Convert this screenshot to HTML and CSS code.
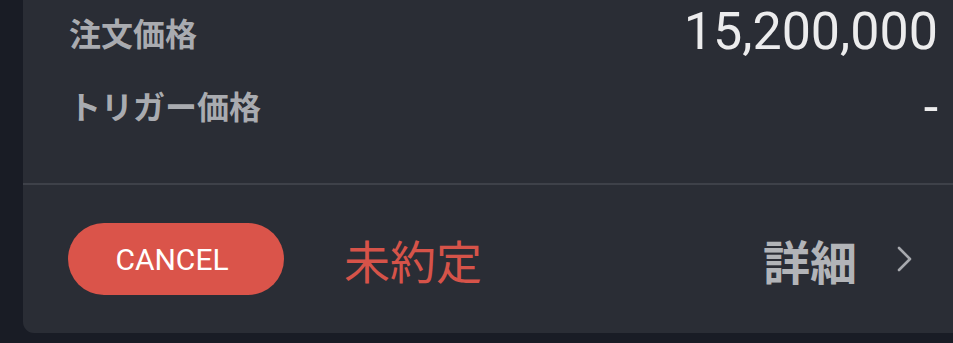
FILE: index.html
```html
<!DOCTYPE html>
<html lang="ja">
<head>
<meta charset="utf-8">
<link rel="stylesheet" href="styles.css">
</head>
<body>
<div class="card">
  <div class="info">
    <div class="row row-first">
      <span class="label">注文価格</span>
      <span class="value">15,200,000</span>
    </div>
    <div class="row row-second">
      <span class="label">トリガー価格</span>
      <span class="value dash">-</span>
    </div>
  </div>
  <div class="footer">
    <button class="cancel">CANCEL</button>
    <span class="status">未約定</span>
    <a class="detail">
      <span class="detail-text">詳細</span>
      <svg class="chev" width="16" height="26" viewBox="0 0 16 26"><path d="M2 2 L13 13 L2 24" fill="none" stroke="#a7a9ae" stroke-width="2.6" stroke-linecap="round" stroke-linejoin="round"/></svg>
    </a>
  </div>
</div>
</body>
</html>
```
FILE: styles.css
```css
html, body {
  margin: 0;
  padding: 0;
  background: #191c25;
  height: 343px;
  overflow: hidden;
}
.card {
  margin-left: 23px;
  height: 333px;
  background: #2a2d35;
  border-bottom-left-radius: 11px;
  display: flex;
  flex-direction: column;
  font-family: "Noto Sans CJK JP", "Noto Sans", sans-serif;
}
.info {
  height: 185px;
  padding: 0 15px 0 46px;
  box-sizing: border-box;
  border-bottom: 2px solid #3e4149;
}
.row {
  display: flex;
  align-items: center;
  justify-content: space-between;
}
.row-first { height: 64px; }
.row-second { height: 82px; }
.label {
  font-size: 32px;
  font-weight: 700;
  color: #a9abb0;
  line-height: 1;
}
.value {
  font-family: Roboto, "Liberation Sans", sans-serif;
  font-size: 52px;
  font-weight: 400;
  color: #ececed;
  line-height: 1;
}
.dash {
  position: relative;
  top: 3px;
}
.footer {
  flex: 1;
  display: flex;
  align-items: center;
  padding: 0 40px 0 45px;
}
.cancel {
  width: 216px;
  height: 72px;
  border: none;
  border-radius: 36px;
  background: #da544a;
  color: #ffffff;
  font-family: Roboto, "Liberation Sans", sans-serif;
  font-size: 30px;
  padding: 0 8px 0 0;
}
.status {
  margin-left: 60px;
  font-size: 46px;
  color: #d65349;
  line-height: 1;
}
.detail {
  margin-left: auto;
  display: flex;
  align-items: center;
  gap: 40px;
}
.detail-text {
  font-size: 47px;
  font-weight: 700;
  color: #b2b4b8;
  line-height: 1;
}
.chev {
  display: block;
}
```
